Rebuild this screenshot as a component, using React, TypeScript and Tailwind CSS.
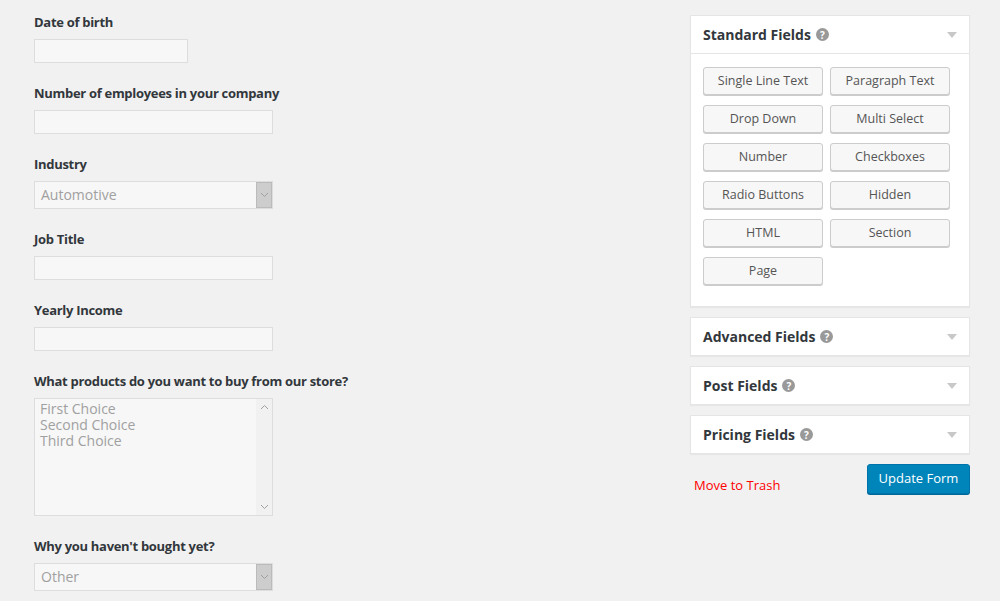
import React from 'react';

const HelpIcon = () => (
  <span className="ml-[5px] inline-flex h-[13px] w-[13px] items-center justify-center rounded-full bg-[#999] text-[10px] font-bold leading-none text-white">
    ?
  </span>
);

const Caret = () => (
  <svg width="10" height="6" viewBox="0 0 10 6" className="text-[#c8c8c8]">
    <path d="M0 0h10L5 6z" fill="currentColor" />
  </svg>
);

const Chevron = ({ up = false }: { up?: boolean }) => (
  <svg width="9" height="6" viewBox="0 0 9 6" className="text-[#a0a0a0]">
    <path d={up ? 'M1 5l3.5-3.5L8 5' : 'M1 1l3.5 3.5L8 1'} fill="none" stroke="currentColor" strokeWidth="1" />
  </svg>
);

const TextInput = ({ wide = true }: { wide?: boolean }) => (
  <div className={`h-6 border border-[#ddd] bg-[#f7f7f7] ${wide ? 'w-[239px]' : 'w-[154px]'}`} />
);

const SelectBox = ({ value }: { value: string }) => (
  <div className="mt-[1px] flex h-[28px] w-[239px] border border-[#ddd] bg-[#f7f7f7]">
    <div className="flex-1 pl-[6px] text-sm leading-[26px] text-[#a0a0a0]">{value}</div>
    <div className="flex w-[16px] items-center justify-center border border-[#bbb] bg-[#cdcdcd]">
      <Chevron />
    </div>
  </div>
);

const Field: React.FC<{ label: string; children: React.ReactNode }> = ({ label, children }) => (
  <div>
    <div className="mb-2 h-5 text-[13px] font-bold leading-[23px] tracking-[-0.3px] text-[#32373c]">{label}</div>
    {children}
  </div>
);

const fieldButtons = [
  'Single Line Text',
  'Paragraph Text',
  'Drop Down',
  'Multi Select',
  'Number',
  'Checkboxes',
  'Radio Buttons',
  'Hidden',
  'HTML',
  'Section',
  'Page',
];

const PanelHeader = ({ title }: { title: string }) => (
  <div className="flex h-[37px] items-center justify-between px-[12px]">
    <div className="flex items-center text-sm font-bold text-[#32373c]">
      {title}
      <HelpIcon />
    </div>
    <Caret />
  </div>
);

export default function App() {
  return (
    <div
      className="flex h-[601px] w-[1000px] overflow-hidden bg-[#f1f1f1]"
      style={{ fontFamily: '"Open Sans", "Liberation Sans", sans-serif' }}
    >
      {/* Form preview */}
      <div className="flex w-[690px] flex-col gap-[19px] pl-[34px] pt-[11px]">
        <Field label="Date of birth">
          <TextInput wide={false} />
        </Field>
        <Field label="Number of employees in your company">
          <TextInput />
        </Field>
        <Field label="Industry">
          <SelectBox value="Automotive" />
        </Field>
        <Field label="Job Title">
          <TextInput />
        </Field>
        <Field label="Yearly Income">
          <TextInput />
        </Field>
        <Field label="What products do you want to buy from our store?">
          <div className="flex h-[118px] w-[239px] border border-[#ddd] bg-[#f7f7f7]">
            <div className="flex-1 pl-[5px] pt-[2px] text-sm leading-4 text-[#a0a0a0]">
              <div>First Choice</div>
              <div>Second Choice</div>
              <div>Third Choice</div>
            </div>
            <div className="flex w-[16px] flex-col items-center justify-between bg-[#f1f1f1] py-[5px]">
              <Chevron up />
              <Chevron />
            </div>
          </div>
        </Field>
        <Field label="Why you haven't bought yet?">
          <SelectBox value="Other" />
        </Field>
      </div>

      {/* Sidebar */}
      <div className="flex w-[280px] flex-col gap-[10px] pt-[15px]">
        <div className="border border-[#e5e5e5] bg-white shadow-[0_1px_1px_rgba(0,0,0,0.04)]">
          <div className="border-b border-[#e5e5e5]">
            <PanelHeader title="Standard Fields" />
          </div>
          <div className="grid grid-cols-[120px_120px] gap-x-[7px] gap-y-[10px] pb-[21px] pl-[12px] pt-[13px]">
            {fieldButtons.map(b => (
              <button
                key={b}
                className="h-[28px] rounded-[3px] border border-[#ccc] bg-[#f7f7f7] text-[12.5px] text-[#555] shadow-[0_1px_0_#ccc]"
              >
                {b}
              </button>
            ))}
          </div>
        </div>
        {['Advanced Fields', 'Post Fields', 'Pricing Fields'].map(t => (
          <div key={t} className="border border-[#e5e5e5] bg-white shadow-[0_1px_1px_rgba(0,0,0,0.04)]">
            <PanelHeader title={t} />
          </div>
        ))}
        <div className="flex items-end justify-between pl-[4px]">
          <a className="mb-[-1px] text-[13px] text-[#ff0000]">Move to Trash</a>
          <button className="h-[30px] w-[103px] rounded-[3px] border border-[#0073aa] bg-[#0085ba] text-[13px] text-white shadow-[0_1px_0_#006799]">
            Update Form
          </button>
        </div>
      </div>
    </div>
  );
}
